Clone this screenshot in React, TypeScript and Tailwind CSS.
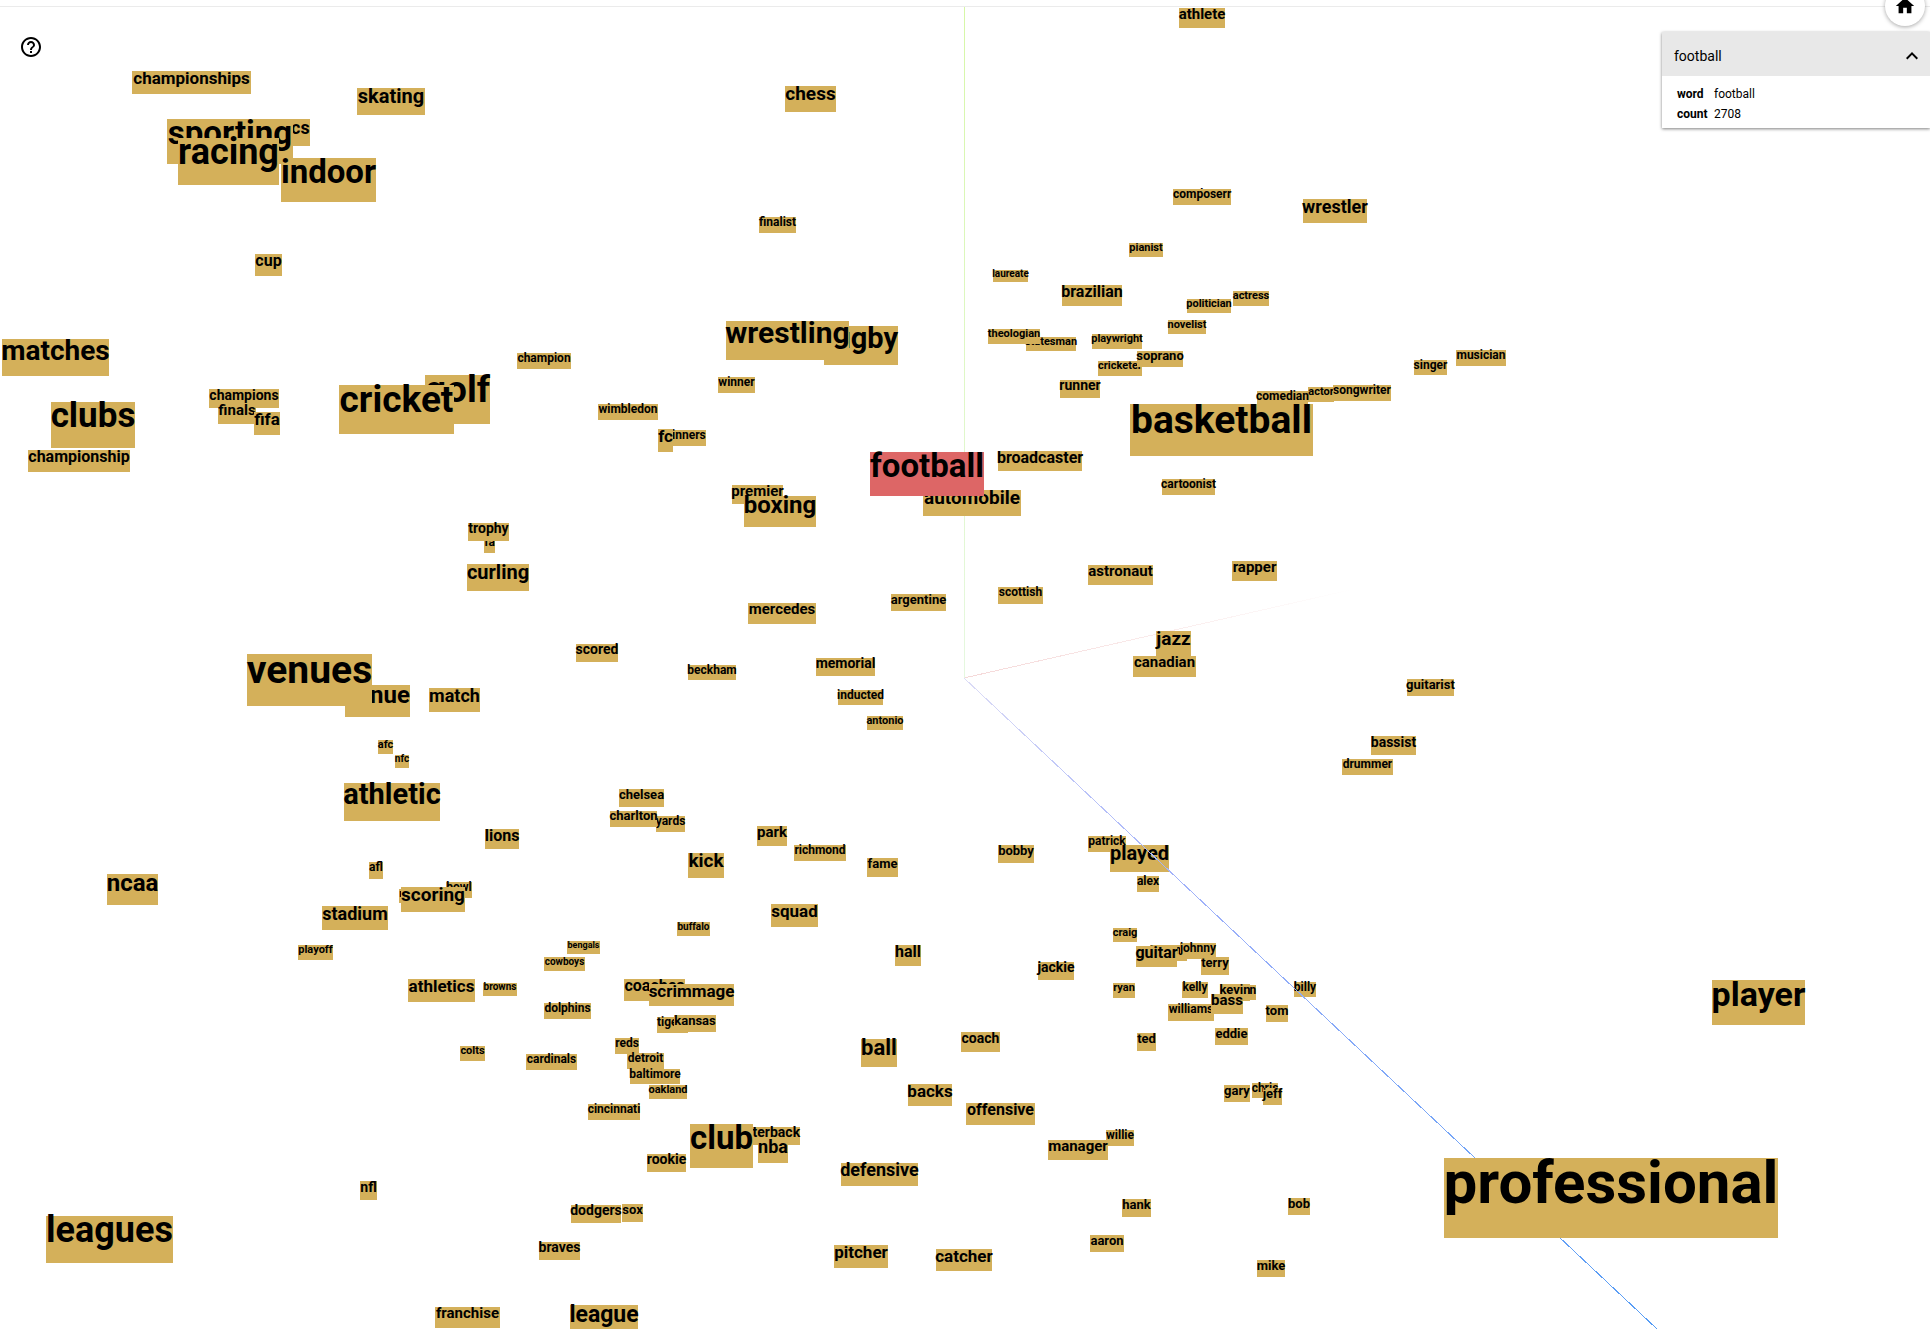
import React from "react";
import { MdExpandLess, MdHelpOutline, MdHome } from "react-icons/md";

// word, left, top, width, height
type Point = [string, number, number, number, number];

const backPoints: Point[] = [
  ["patrick", 1088, 836, 38, 16],
  ["played", 1110, 845, 59, 27],
  ["billy", 1294, 982, 22, 15],
];

const points: Point[] = [
  ["athlete", 1179, 8, 46, 20],
  ["championships", 132, 71, 119, 23],
  ["skating", 357, 88, 68, 27],
  ["gymnastics", 216, 119, 94, 27],
  ["sporting", 167, 119, 126, 45],
  ["racing", 178, 138, 101, 47],
  ["indoor", 281, 158, 95, 44],
  ["cup", 255, 254, 27, 22],
  ["matches", 2, 339, 107, 37],
  ["clubs", 51, 402, 84, 46],
  ["championship", 28, 450, 102, 22],
  ["champions", 209, 389, 70, 19],
  ["finals", 218, 404, 38, 20],
  ["fifa", 254, 412, 26, 23],
  ["golf", 425, 375, 65, 49],
  ["cricket", 339, 385, 115, 49],
  ["champion", 517, 353, 54, 16],
  ["chess", 785, 86, 51, 26],
  ["finalist", 759, 217, 37, 16],
  ["laureate", 993, 270, 35, 12],
  ["brazilian", 1062, 285, 60, 21],
  ["rugby", 824, 326, 74, 39],
  ["wrestling", 726, 321, 123, 39],
  ["winner", 718, 377, 37, 16],
  ["wimbledon", 598, 404, 60, 16],
  ["winners", 663, 430, 43, 16],
  ["fc", 658, 429, 15, 23],
  ["broadcaster", 998, 451, 84, 20],
  ["statesman", 1026, 337, 50, 14],
  ["theologian", 988, 329, 52, 15],
  ["runner", 1060, 380, 40, 18],
  ["conductor", 1177, 189, 54, 16],
  ["composer", 1173, 189, 54, 16],
  ["wrestler", 1303, 199, 64, 24],
  ["pianist", 1129, 243, 34, 14],
  ["actress", 1233, 291, 36, 15],
  ["politician", 1187, 299, 44, 14],
  ["novelist", 1168, 320, 38, 14],
  ["playwright", 1092, 334, 50, 15],
  ["cricketer", 1098, 361, 44, 15],
  ["soprano", 1137, 351, 46, 16],
  ["singer", 1414, 360, 33, 15],
  ["musician", 1456, 350, 50, 16],
  ["actor", 1308, 387, 26, 15],
  ["comedian", 1257, 391, 51, 16],
  ["songwriter", 1333, 385, 58, 16],
  ["basketball", 1130, 404, 183, 52],
  ["cartoonist", 1162, 479, 53, 16],
  ["automobile", 923, 490, 98, 26],
  ["astronaut", 1088, 565, 65, 20],
  ["rapper", 1232, 561, 45, 20],
  ["jazz", 1156, 631, 35, 25],
  ["canadian", 1133, 656, 63, 21],
  ["guitarist", 1407, 679, 47, 17],
  ["bassist", 1371, 736, 45, 19],
  ["drummer", 1342, 759, 51, 16],
  ["alex", 1137, 876, 22, 16],
  ["fa", 484, 537, 11, 16],
  ["trophy", 468, 523, 41, 18],
  ["curling", 467, 564, 62, 27],
  ["venue", 345, 685, 65, 32],
  ["venues", 247, 654, 125, 52],
  ["match", 429, 688, 51, 24],
  ["afc", 378, 740, 15, 14],
  ["nfc", 395, 755, 14, 13],
  ["athletic", 344, 783, 96, 38],
  ["lions", 485, 829, 34, 20],
  ["afl", 369, 862, 14, 17],
  ["ncaa", 107, 874, 51, 31],
  ["bowl", 446, 882, 26, 16],
  ["redskins", 399, 889, 43, 14],
  ["scoring", 401, 887, 64, 25],
  ["stadium", 322, 906, 66, 24],
  ["playoff", 298, 945, 35, 15],
  ["premier", 732, 485, 51, 19],
  ["boxing", 744, 496, 72, 31],
  ["mercedes", 748, 603, 68, 21],
  ["argentine", 891, 594, 55, 17],
  ["scottish", 998, 587, 45, 17],
  ["scored", 576, 644, 42, 18],
  ["beckham", 688, 665, 48, 15],
  ["memorial", 816, 658, 59, 18],
  ["inducted", 838, 690, 45, 15],
  ["antonio", 867, 716, 36, 14],
  ["chelsea", 619, 789, 45, 18],
  ["yards", 656, 816, 29, 16],
  ["charlton", 610, 811, 47, 16],
  ["park", 757, 826, 30, 20],
  ["richmond", 794, 845, 52, 16],
  ["fame", 867, 858, 31, 19],
  ["bobby", 998, 845, 36, 18],
  ["kick", 688, 853, 36, 25],
  ["squad", 771, 904, 47, 23],
  ["buffalo", 677, 922, 33, 14],
  ["bengals", 567, 941, 33, 13],
  ["cowboys", 544, 957, 41, 14],
  ["athletics", 408, 979, 67, 23],
  ["browns", 483, 983, 34, 13],
  ["dolphins", 544, 1003, 47, 16],
  ["coaches", 624, 979, 61, 22],
  ["scrimmage", 649, 984, 85, 22],
  ["tigers", 657, 1017, 31, 16],
  ["kansas", 674, 1015, 42, 17],
  ["colts", 460, 1046, 25, 15],
  ["cardinals", 526, 1054, 51, 16],
  ["reds", 615, 1038, 24, 16],
  ["detroit", 627, 1053, 37, 16],
  ["baltimore", 630, 1069, 50, 15],
  ["oakland", 649, 1085, 38, 14],
  ["cincinnati", 588, 1104, 52, 16],
  ["quarterback", 724, 1127, 76, 18],
  ["club", 690, 1124, 63, 44],
  ["nba", 758, 1139, 30, 24],
  ["rookie", 647, 1154, 39, 18],
  ["nfl", 360, 1181, 17, 19],
  ["dodgers", 571, 1205, 50, 18],
  ["sox", 622, 1204, 21, 18],
  ["braves", 539, 1242, 41, 18],
  ["franchise", 435, 1307, 65, 21],
  ["league", 570, 1305, 68, 32],
  ["leagues", 46, 1216, 127, 47],
  ["hall", 895, 945, 26, 21],
  ["ball", 861, 1039, 36, 28],
  ["coach", 961, 1032, 39, 20],
  ["backs", 908, 1084, 44, 22],
  ["offensive", 966, 1103, 69, 22],
  ["jackie", 1038, 962, 36, 18],
  ["craig", 1113, 928, 24, 14],
  ["tommy", 1150, 945, 37, 16],
  ["guitar", 1136, 946, 41, 21],
  ["johnny", 1180, 943, 36, 16],
  ["terry", 1201, 957, 28, 18],
  ["ryan", 1113, 983, 22, 15],
  ["kelly", 1182, 982, 26, 16],
  ["brian", 1229, 985, 27, 15],
  ["kevin", 1220, 984, 30, 17],
  ["williams", 1168, 1004, 46, 17],
  ["bass", 1211, 994, 32, 20],
  ["ted", 1137, 1033, 19, 18],
  ["eddie", 1215, 1028, 33, 17],
  ["tom", 1266, 1005, 22, 17],
  ["gary", 1224, 1085, 26, 17],
  ["chris", 1252, 1083, 26, 15],
  ["jeff", 1263, 1088, 19, 17],
  ["willie", 1106, 1130, 28, 16],
  ["manager", 1048, 1140, 60, 20],
  ["defensive", 841, 1163, 77, 23],
  ["hank", 1122, 1199, 29, 18],
  ["bob", 1288, 1198, 22, 17],
  ["aaron", 1090, 1235, 34, 17],
  ["pitcher", 834, 1245, 54, 23],
  ["catcher", 936, 1249, 56, 22],
  ["mike", 1257, 1260, 28, 17],
  ["player", 1712, 980, 93, 45],
  ["professional", 1444, 1158, 334, 80],
  ["football", 870, 452, 114, 44],
];

const SELECTED = "football";

const ctx = document.createElement("canvas").getContext("2d");

// Whole-pixel size at which the word fills its sprite.
function fontSize(word: string, width: number, height: number): number {
  if (!ctx) return Math.round(height * 0.75);
  ctx.font = '700 100px Roboto, "Noto Sans", sans-serif';
  return Math.round((width * 100) / ctx.measureText(word).width);
}

function Labels({ items }: { items: Point[] }) {
  return (
    <ul>
      {items.map(([word, left, top, width, height]) => (
        <li
          key={word}
          className={
            "absolute flex items-start justify-center whitespace-nowrap font-bold text-black " +
            (word === SELECTED ? "bg-[#dd6666]" : "bg-[#d4b05a]")
          }
          style={{
            left,
            top,
            width,
            height,
            fontSize: fontSize(word, width, height),
            lineHeight: `${Math.round(height * 0.6 + 0.5)}px`,
          }}
        >
          {word}
        </li>
      ))}
    </ul>
  );
}

function Axes() {
  return (
    <svg className="absolute inset-0 h-full w-full" aria-hidden="true" shapeRendering="crispEdges">
      <defs>
        <linearGradient id="axis-x" gradientUnits="userSpaceOnUse" x1="964" y1="678" x2="1350" y2="590">
          <stop offset="0" stopColor="#f5d8d8" />
          <stop offset="1" stopColor="#ffffff" />
        </linearGradient>
        <linearGradient id="axis-y" gradientUnits="userSpaceOnUse" x1="964" y1="678" x2="964" y2="0">
          <stop offset="0" stopColor="#e6f8e0" />
          <stop offset="1" stopColor="#d6f7a6" />
        </linearGradient>
        <linearGradient id="axis-z" gradientUnits="userSpaceOnUse" x1="964" y1="678" x2="1657" y2="1329">
          <stop offset="0" stopColor="#dcdcf6" />
          <stop offset="0.3" stopColor="#a3b2fa" />
          <stop offset="1" stopColor="#559cf5" />
        </linearGradient>
      </defs>
      <path d="M964 678L1350 590" stroke="url(#axis-x)" />
      <rect x="964" y="7" width="1" height="671" fill="url(#axis-y)" />
      <path d="M964 678L1657 1329" stroke="url(#axis-z)" />
    </svg>
  );
}

export default function App() {
  return (
    <div className="relative h-screen overflow-hidden bg-white font-[Roboto,'Noto_Sans',sans-serif] text-black">
      <main className="absolute inset-0 overflow-hidden" aria-label="Projector">
        <Labels items={backPoints} />
        <Axes />
        <Labels items={points} />
      </main>

      <header className="relative h-[7px] border-b border-[#ebebeb]">
        <button
          type="button"
          aria-label="Reset view"
          className="absolute -top-[14px] right-[5px] flex size-10 items-center justify-center rounded-full bg-white shadow-[0_1px_4px_rgba(0,0,0,0.35)]"
        >
          <MdHome size={22} />
        </button>
      </header>

      <div className="relative flex items-start justify-between pt-[25px] pl-4">
        <button type="button" aria-label="Help" className="flex size-[30px] items-center justify-center">
          <MdHelpOutline size={24} />
        </button>

        <aside className="w-[268px] bg-white shadow-[0_1px_3px_rgba(0,0,0,0.5)]">
          <button
            type="button"
            aria-expanded="true"
            className="flex h-11 w-full items-center justify-between bg-[#e8e8e8] pt-[3px] pr-[6px] pl-3 text-sm"
          >
            <span>football</span>
            <MdExpandLess size={24} />
          </button>
          <table className="mt-2 mb-1 ml-[15px] text-xs leading-5">
            <tbody>
              <tr>
                <th scope="row" className="w-[37px] p-0 text-left font-bold">word</th>
                <td className="p-0">football</td>
              </tr>
              <tr>
                <th scope="row" className="w-[37px] p-0 text-left font-bold">count</th>
                <td className="p-0">2708</td>
              </tr>
            </tbody>
          </table>
        </aside>
      </div>
    </div>
  );
}
